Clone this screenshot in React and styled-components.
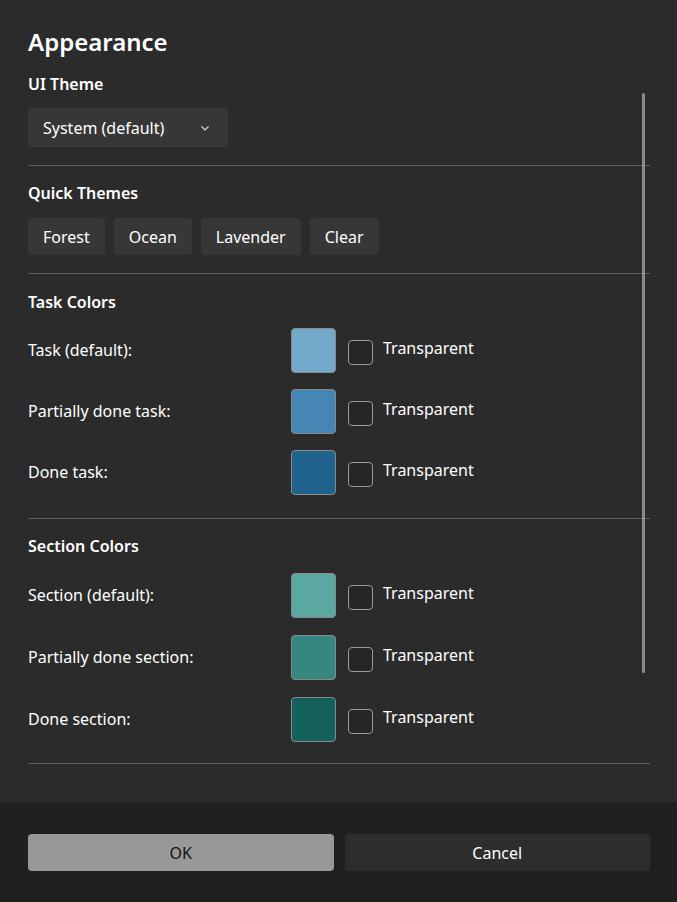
import React from 'react'
import styled, { createGlobalStyle } from 'styled-components'

const Global = createGlobalStyle`
  html, body { margin: 0; background: #2b2b2b; }
  body { font-family: "Segoe UI", "Noto Sans", "Open Sans", sans-serif; color: #fff; }
`

const Dialog = styled.div`
  width: 677px;
  height: 902px;
  display: flex;
  flex-direction: column;
  position: relative;
  overflow: hidden;
`

const Content = styled.div`
  flex: 1;
  padding: 26px 27px 0 28px;
`

const Title = styled.h1`
  margin: 0 0 15px;
  font-size: 24px;
  font-weight: 600;
  line-height: 32px;
`

const Section = styled.div`
  padding: ${({ top }) => top}px 0 ${({ bottom }) => bottom}px;
  border-bottom: 1px solid #5f5f5f;
`

const Label = styled.div`
  font-size: 16px;
  font-weight: 600;
  line-height: 22px;
  margin-bottom: ${({ gap }) => gap}px;
`

const Dropdown = styled.div`
  width: 200px;
  height: 39px;
  box-sizing: border-box;
  padding: 0 16px 0 15px;
  background: #373737;
  border-radius: 4px;
  display: flex;
  align-items: center;
  justify-content: space-between;
  font-size: 16px;
`

const ButtonRow = styled.div`
  display: flex;
  gap: 9px;
`

const ThemeButton = styled.div`
  height: 37px;
  padding: 0 15px;
  background: #373737;
  border-radius: 4px;
  display: flex;
  align-items: center;
  font-size: 16px;
`

const Rows = styled.div`
  display: flex;
  flex-direction: column;
  gap: ${({ gap }) => gap}px;
`

const Row = styled.div`
  display: flex;
  align-items: center;
  height: 44px;
  font-size: 16px;
`

const RowLabel = styled.div`
  width: 263px;
`

const Swatch = styled.div`
  width: 45px;
  height: 45px;
  box-sizing: border-box;
  border: 1px solid #8a8a8a;
  border-radius: 4px;
  background: ${({ color }) => color};
  margin-right: 12px;
`

const Check = styled.div`
  width: 25px;
  height: 25px;
  box-sizing: border-box;
  border: 1px solid #9a9a9a;
  border-radius: 4px;
  background: #262626;
  margin: 4px 10px 0 0;
`

const CheckText = styled.div`
  font-size: 16px;
  margin-top: -4px;
`

const Scrollbar = styled.div`
  position: absolute;
  left: 642px;
  top: 93px;
  width: 3px;
  height: 580px;
  border-radius: 2px;
  background: #8c8c8c;
`

const Footer = styled.div`
  height: 100px;
  background: #202020;
  box-sizing: border-box;
  padding: 32px 27px 0 28px;
  display: flex;
  gap: 11px;
`

const FooterButton = styled.div`
  flex: 1;
  height: 37px;
  border-radius: 4px;
  display: flex;
  align-items: center;
  justify-content: center;
  font-size: 16px;
  background: ${({ primary }) => (primary ? '#989898' : '#2d2d2d')};
  color: ${({ primary }) => (primary ? '#111' : '#fff')};
`

const ColorRow = ({ label, color }) => (
  <Row>
    <RowLabel>{label}</RowLabel>
    <Swatch color={color} />
    <Check />
    <CheckText>Transparent</CheckText>
  </Row>
)

export default function App() {
  return (
    <Dialog>
      <Global />
      <Content>
        <Title>Appearance</Title>
        <Section top={0} bottom={18}>
          <Label gap={13}>UI Theme</Label>
          <Dropdown>
            System (default)
            <svg width="14" height="14" viewBox="0 0 14 14" fill="none" stroke="#ddd" strokeWidth="1.1">
              <path d="M3.5 5.5l3.5 3.5 3.5-3.5" />
            </svg>
          </Dropdown>
        </Section>
        <Section top={16} bottom={18}>
          <Label gap={14}>Quick Themes</Label>
          <ButtonRow>
            <ThemeButton>Forest</ThemeButton>
            <ThemeButton>Ocean</ThemeButton>
            <ThemeButton>Lavender</ThemeButton>
            <ThemeButton>Clear</ThemeButton>
          </ButtonRow>
        </Section>
        <Section top={17} bottom={24}>
          <Label gap={15}>Task Colors</Label>
          <Rows gap={17}>
            <ColorRow label="Task (default):" color="#72a9cb" />
            <ColorRow label="Partially done task:" color="#4686b4" />
            <ColorRow label="Done task:" color="#1f628d" />
          </Rows>
        </Section>
        <Section top={16} bottom={22}>
          <Label gap={16}>Section Colors</Label>
          <Rows gap={18}>
            <ColorRow label="Section (default):" color="#5aa8a0" />
            <ColorRow label="Partially done section:" color="#35877f" />
            <ColorRow label="Done section:" color="#14605a" />
          </Rows>
        </Section>
      </Content>
      <Scrollbar />
      <Footer>
        <FooterButton primary>OK</FooterButton>
        <FooterButton>Cancel</FooterButton>
      </Footer>
    </Dialog>
  )
}
